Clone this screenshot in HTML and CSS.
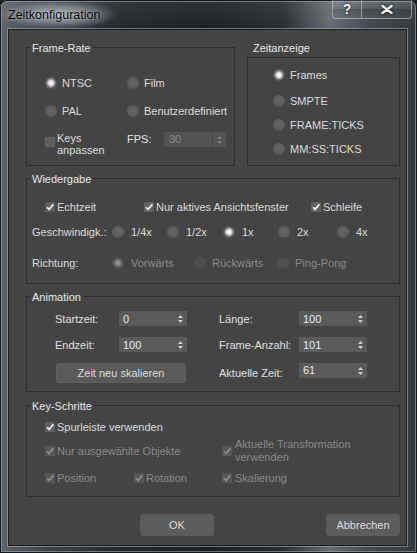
FILE: index.html
```html
<!DOCTYPE html>
<html lang="de">
<head>
<meta charset="utf-8">
<title>Zeitkonfiguration</title>
<link rel="stylesheet" href="styles.css">
</head>
<body>
<div class="window">
  <div class="titlebar">
    <span class="title">Zeitkonfiguration</span>
    <div class="caps">
      <span class="cbtn help">?</span>
      <span class="cbtn close"><svg width="12" height="9" viewBox="0 0 12 9"><path d="M1.5 1 L10.5 8 M10.5 1 L1.5 8" stroke="#f4f4f4" stroke-width="2.4" stroke-linecap="round"/></svg></span>
    </div>
  </div>
  <div class="client">
    <div class="toprow">
      <fieldset class="grp fr">
        <legend>Frame-Rate</legend>
        <div class="fr-body">
          <div class="opt"><span class="radio on"></span><span class="lbl5">NTSC</span></div>
          <div class="opt"><span class="radio"></span><span class="lbl5">Film</span></div>
          <div class="opt"><span class="radio"></span><span class="lbl5">PAL</span></div>
          <div class="opt"><span class="radio"></span><span class="lbl5">Benutzerdefiniert</span></div>
          <div class="keys"><span class="chk"></span><span class="two">Keys<br>anpassen</span></div>
          <div class="fps">
            <span class="fps-lbl">FPS:</span>
            <span class="fps-in">30</span>
            <span class="fps-spin"><svg width="5" height="10" viewBox="0 0 5 10"><path d="M0 4L2.5 1L5 4Z M0 6L2.5 9L5 6Z" fill="#7e7e7e"/></svg></span>
          </div>
        </div>
      </fieldset>
      <div class="zeit">
        <div class="zeit-title">Zeitanzeige</div>
        <div class="zeit-box">
          <div class="opt"><span class="radio on"></span><span class="lbl5">Frames</span></div>
          <div class="opt z2"><span class="radio"></span><span class="lbl5">SMPTE</span></div>
          <div class="opt z3"><span class="radio"></span><span class="lbl5">FRAME:TICKS</span></div>
          <div class="opt z3"><span class="radio"></span><span class="lbl5">MM:SS:TICKS</span></div>
        </div>
      </div>
    </div>

    <fieldset class="grp wg">
      <legend>Wiedergabe</legend>
      <div class="wg-body">
        <div class="wg-row1">
          <div class="opt"><span class="chk on"><svg width="10" height="10" viewBox="0 0 10 10"><path d="M2 5.2L4 7.4L8.4 2.4" stroke="#f0f0f0" stroke-width="1.7" fill="none"/></svg></span><span class="lbl2">Echtzeit</span></div>
          <div class="opt"><span class="chk on"><svg width="10" height="10" viewBox="0 0 10 10"><path d="M2 5.2L4 7.4L8.4 2.4" stroke="#f0f0f0" stroke-width="1.7" fill="none"/></svg></span><span class="lbl2">Nur aktives Ansichtsfenster</span></div>
          <div class="opt"><span class="chk on"><svg width="10" height="10" viewBox="0 0 10 10"><path d="M2 5.2L4 7.4L8.4 2.4" stroke="#f0f0f0" stroke-width="1.7" fill="none"/></svg></span><span class="lbl2">Schleife</span></div>
        </div>
        <div class="wg-row speed">
          <span class="rowlbl">Geschwindigk.:</span>
          <div class="opt w55"><span class="radio"></span><span class="lbl7">1/4x</span></div>
          <div class="opt w56"><span class="radio"></span><span class="lbl7">1/2x</span></div>
          <div class="opt w55"><span class="radio on"></span><span class="lbl7">1x</span></div>
          <div class="opt w59"><span class="radio"></span><span class="lbl7">2x</span></div>
          <div class="opt"><span class="radio"></span><span class="lbl7">4x</span></div>
        </div>
        <div class="wg-row dir">
          <span class="rowlbl">Richtung:</span>
          <div class="opt w82 dis"><span class="radio on"></span><span class="lbl7">Vorwärts</span></div>
          <div class="opt w83 dis"><span class="radio"></span><span class="lbl6">Rückwärts</span></div>
          <div class="opt dis"><span class="radio"></span><span class="lbl6">Ping-Pong</span></div>
        </div>
      </div>
    </fieldset>

    <fieldset class="grp anim">
      <legend>Animation</legend>
      <div class="anim-body">
        <span class="albl">Startzeit:</span>
        <span class="spinner"><span>0</span><svg width="5" height="10" viewBox="0 0 5 10"><path d="M0 4L2.5 1L5 4Z M0 6L2.5 9L5 6Z" fill="#cfcfcf"/></svg></span>
        <span></span>
        <span class="albl">Länge:</span>
        <span class="spinner"><span>100</span><svg width="5" height="10" viewBox="0 0 5 10"><path d="M0 4L2.5 1L5 4Z M0 6L2.5 9L5 6Z" fill="#cfcfcf"/></svg></span>

        <span class="albl">Endzeit:</span>
        <span class="spinner"><span>100</span><svg width="5" height="10" viewBox="0 0 5 10"><path d="M0 4L2.5 1L5 4Z M0 6L2.5 9L5 6Z" fill="#cfcfcf"/></svg></span>
        <span></span>
        <span class="albl">Frame-Anzahl:</span>
        <span class="spinner"><span>101</span><svg width="5" height="10" viewBox="0 0 5 10"><path d="M0 4L2.5 1L5 4Z M0 6L2.5 9L5 6Z" fill="#cfcfcf"/></svg></span>

        <span class="btn rescale">Zeit neu skalieren</span>
        <span></span>
        <span class="albl">Aktuelle Zeit:</span>
        <span class="spinner top"><span class="hi">61</span><svg width="5" height="10" viewBox="0 0 5 10"><path d="M0 4L2.5 1L5 4Z M0 6L2.5 9L5 6Z" fill="#cfcfcf"/></svg></span>
      </div>
    </fieldset>

    <fieldset class="grp ks">
      <legend>Key-Schritte</legend>
      <div class="ks-body">
        <div class="opt"><span class="chk on"><svg width="10" height="10" viewBox="0 0 10 10"><path d="M2 5.2L4 7.4L8.4 2.4" stroke="#f0f0f0" stroke-width="1.7" fill="none"/></svg></span><span class="lbl2">Spurleiste verwenden</span></div>
        <div class="ks-grid r2">
          <div class="opt dis span2"><span class="chk on"><svg width="10" height="10" viewBox="0 0 10 10"><path d="M2 5.2L4 7.4L8.4 2.4" stroke="#8e8e8e" stroke-width="1.7" fill="none"/></svg></span><span class="lbl2">Nur ausgewählte Objekte</span></div>
          <div class="opt dis tall"><span class="chk on"><svg width="10" height="10" viewBox="0 0 10 10"><path d="M2 5.2L4 7.4L8.4 2.4" stroke="#8e8e8e" stroke-width="1.7" fill="none"/></svg></span><span class="lbl3 two13">Aktuelle Transformation<br>verwenden</span></div>
        </div>
        <div class="ks-grid r3">
          <div class="opt dis"><span class="chk on"><svg width="10" height="10" viewBox="0 0 10 10"><path d="M2 5.2L4 7.4L8.4 2.4" stroke="#8e8e8e" stroke-width="1.7" fill="none"/></svg></span><span class="lbl2">Position</span></div>
          <div class="opt dis"><span class="chk on"><svg width="10" height="10" viewBox="0 0 10 10"><path d="M2 5.2L4 7.4L8.4 2.4" stroke="#8e8e8e" stroke-width="1.7" fill="none"/></svg></span><span class="lbl2">Rotation</span></div>
          <div class="opt dis"><span class="chk on"><svg width="10" height="10" viewBox="0 0 10 10"><path d="M2 5.2L4 7.4L8.4 2.4" stroke="#8e8e8e" stroke-width="1.7" fill="none"/></svg></span><span class="lbl3">Skalierung</span></div>
        </div>
      </div>
    </fieldset>

    <div class="footer">
      <span class="btn ok">OK</span>
      <span class="btn cancel">Abbrechen</span>
    </div>
  </div>
</div>
</body>
</html>
```

FILE: styles.css
```css
* { box-sizing: border-box; }
html, body { margin: 0; padding: 0; background: #1c1e20; }
body {
  font-family: "Liberation Sans", Arial, sans-serif;
  font-size: 11px;
  line-height: 14px;
  color: #dcdcdc;
}

.window {
  width: 417px;
  height: 553px;
  border-radius: 7px 7px 0 0;
  overflow: hidden;
  background:
    linear-gradient(180deg, rgba(255,255,255,0.08) 0px, rgba(255,255,255,0) 28px),
    linear-gradient(90deg, #5d646b 0%, #3b4146 12%, #24282c 30%, #1d2124 50%, #2a2e32 68%, #666c72 79%, #454a4f 88%, #34383c 100%);
  box-shadow: inset 0 0 0 1px #14171a, inset 0 0 0 2px rgba(170,178,186,0.55);
}

.titlebar {
  height: 29px;
  display: flex;
  justify-content: space-between;
  align-items: flex-start;
}
.title {
  margin: 0;
  padding: 8px 18px 7px 8px;
  color: #050505;
  font-size: 12.5px;
  background: radial-gradient(closest-side, rgba(205,210,215,0.8) 0%, rgba(190,196,202,0.45) 55%, rgba(190,196,202,0) 100%);
  background-size: 100% 100%;
  text-shadow: 0 0 3px rgba(255,255,255,0.55);
}
.caps {
  display: flex;
  margin-right: 5px;
}
.cbtn {
  height: 19px;
  display: flex;
  align-items: center;
  justify-content: center;
  border: 1px solid rgba(200,206,212,0.55);
  border-top: none;
  background: linear-gradient(180deg, rgba(255,255,255,0.14) 0%, rgba(255,255,255,0.06) 50%, rgba(0,0,0,0.08) 51%, rgba(255,255,255,0.04) 100%);
  color: #f6f6f6;
}
.help {
  width: 30px;
  border-radius: 0 0 0 4px;
  font-weight: bold;
  font-size: 14px;
  text-shadow: 0 0 2px #000;
}
.close {
  width: 50px;
  border-left: none;
  border-radius: 0 0 4px 0;
}
.close svg { filter: drop-shadow(0 0 1px #000); }

.client {
  margin-left: 8px;
  width: 399px;
  height: 517px;
  background: #444444;
  border: 1px solid #1e1e1e;
  box-shadow: 0 0 0 1px rgba(175,182,188,0.55);
  padding: 9px 6px 0 17px;
}

/* group boxes */
.grp {
  border: 1px solid #2c2c2c;
  margin: 0;
  padding: 0;
  min-width: 0;
}
.grp legend {
  margin-left: 3px;
  padding: 2px 2px 0;
  line-height: 14px;
  color: #e8e8e8;
}

.opt { display: flex; align-items: center; height: 14px; white-space: nowrap; }
.lbl2 { margin-left: 2px; }
.lbl3 { margin-left: 3px; }
.lbl5 { margin-left: 5px; }
.lbl6 { margin-left: 6px; }
.lbl7 { margin-left: 7px; }

.radio {
  flex: none;
  width: 12px;
  height: 12px;
  border-radius: 50%;
  background: radial-gradient(circle at 50% 45%, #666 0%, #5c5c5c 60%, #555 100%);
}
.radio.on {
  background: radial-gradient(circle at 50% 50%, #ffffff 0px, #f2f2f2 1.5px, #c9c9c9 3px, #7a7a7a 4.3px, #606060 5.2px, #575757 6px);
}
.dis { color: #8a8a8a; }
.dis .radio { background: #4f4f4f; }
.dis .radio.on {
  background: radial-gradient(circle at 50% 50%, #9a9a9a 0px, #8a8a8a 2px, #6a6a6a 3.5px, #555 4.6px, #4f4f4f 6px);
}

.chk {
  flex: none;
  width: 10px;
  height: 10px;
  background: #606060;
  display: block;
}
.chk svg { display: block; }
.dis .chk { background: #575757; }

/* top row */
.toprow {
  display: flex;
  gap: 12px;
  align-items: flex-start;
}
.fr { width: 209px; }
.fr-body {
  display: grid;
  grid-template-columns: 82px auto;
  grid-template-rows: 14px 14px 24px;
  row-gap: 14px;
  padding: 21px 0 9px 18px;
}
.keys { display: flex; align-items: flex-start; }
.keys .chk { margin-top: 5px; }
.two { margin-left: 2px; line-height: 12px; }
.fps { display: flex; align-items: flex-start; }
.fps-lbl { width: 37px; color: #e6e6e6; }
.fps-in {
  width: 48px;
  height: 15px;
  background: #535353;
  color: #8a8a8a;
  padding-left: 5px;
  line-height: 15px;
}
.fps-spin {
  width: 13px;
  height: 15px;
  margin-left: 1px;
  background: #535353;
  display: flex;
  align-items: center;
  justify-content: center;
}

.zeit { width: 153px; }
.zeit-title {
  padding: 2px 0 0 6px;
  line-height: 14px;
  margin-bottom: 2px;
  color: #e8e8e8;
}
.zeit-box {
  border: 1px solid #2c2c2c;
  padding: 10px 0 9px 25px;
}
.zeit-box .z2 { margin-top: 12px; }
.zeit-box .z3 { margin-top: 10px; }

/* Wiedergabe */
.wg { margin-top: 4px; }
.wg-body { padding: 14px 0 13px 0; }
.wg-row1 {
  display: grid;
  grid-template-columns: 99px 167px auto;
  padding-left: 18px;
  height: 14px;
}
.wg-row { display: flex; align-items: center; height: 14px; padding-left: 5px; }
.speed { margin-top: 11px; }
.dir { margin-top: 17px; }
.rowlbl { width: 80px; flex: none; }
.w55 { width: 55px; }
.w56 { width: 56px; }
.w59 { width: 59px; }
.w82 { width: 82px; }
.w83 { width: 83px; }

/* Animation */
.anim { margin-top: 4px; }
.anim-body {
  display: grid;
  grid-template-columns: 64px 68px 32px 80px 68px;
  grid-template-rows: 15px 15px 20px;
  row-gap: 11px;
  padding: 7px 0 8px 28px;
  align-items: center;
}
.albl { color: #e0e0e0; white-space: nowrap; }
.spinner {
  height: 15px;
  background: #5a5a5a;
  display: flex;
  align-items: center;
  justify-content: space-between;
  padding: 0 4px 0 4px;
  color: #ececec;
}
.spinner.top { align-self: start; }
.spinner .hi { margin-top: -2px; }
.btn {
  display: flex;
  align-items: center;
  justify-content: center;
  background: #5a5a5a;
  border: 1px solid #606060;
  border-radius: 3px;
  color: #dedede;
}
.rescale {
  grid-column: 1 / 3;
  width: 130px;
  height: 20px;
  margin-left: 1px;
}

/* Key-Schritte */
.ks { margin-top: 5px; }
.ks-body { padding: 7px 0 11px 18px; }
.ks-grid {
  display: grid;
  grid-template-columns: 89px 88px auto;
  align-items: center;
}
.ks-grid.r2 { margin-top: 4px; height: 26px; }
.ks-grid.r3 { margin-top: 7px; height: 14px; }
.span2 { grid-column: 1 / 3; }
.two13 { line-height: 13px; white-space: nowrap; }
.opt.tall { height: 26px; }

/* footer */
.footer {
  display: flex;
  margin-top: 17px;
}
.ok, .cancel {
  width: 74px;
  height: 22px;
  background: #5c5c5c;
  border-color: #5c5c5c;
}
.ok { margin-left: 114px; }
.cancel { margin-left: auto; }
```
